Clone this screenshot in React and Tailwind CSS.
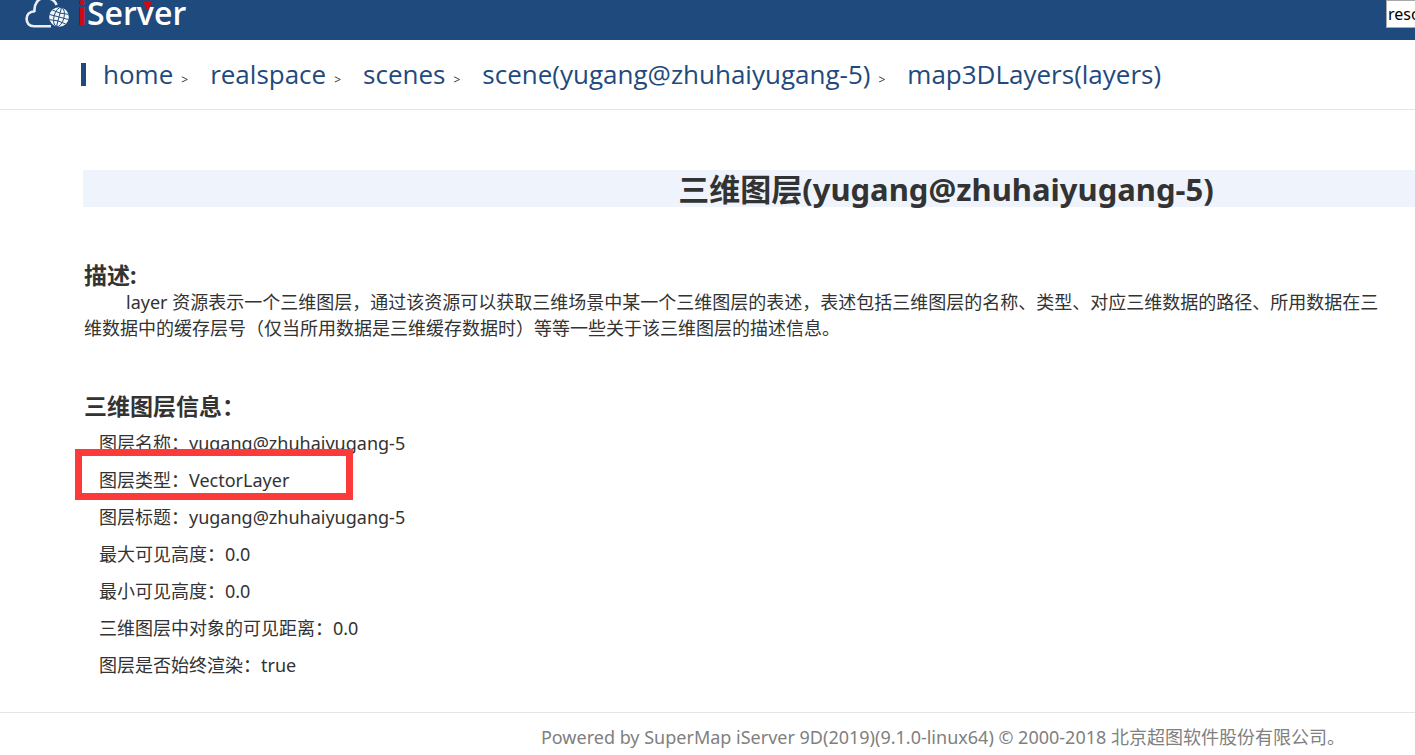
const crumbs = ['home', 'realspace', 'scenes', 'scene(yugang@zhuhaiyugang-5)', 'map3DLayers(layers)'];

const layerInfo = [
  { label: '图层名称', value: 'yugang@zhuhaiyugang-5' },
  { label: '图层类型', value: 'VectorLayer', marked: true },
  { label: '图层标题', value: 'yugang@zhuhaiyugang-5' },
  { label: '最大可见高度', value: '0.0' },
  { label: '最小可见高度', value: '0.0' },
  { label: '三维图层中对象的可见距离', value: '0.0' },
  { label: '图层是否始终渲染', value: 'true' },
];

function Logo() {
  return (
    <svg width="170" height="40" viewBox="0 0 170 40" aria-label="iServer" className="block shrink-0">
      {/* cloud */}
      <path
        d="M27 26.2H10C5 26.2 2.6 23 2.6 18.8C2.6 14.5 5.5 11.2 11 11.2M10.6 12C9.5 4 14.5 -2 20.5 -2C27 -2 31 0.6 32.6 5"
        fill="none"
        stroke="#e9eef5"
        strokeWidth="2.6"
      />
      {/* globe */}
      <circle cx="35" cy="17" r="9.8" fill="#f4f7fa" />
      <g fill="none" stroke="#1f4a7d" strokeWidth="0.9" transform="rotate(15 35 17)">
        <ellipse cx="35" cy="17" rx="5" ry="9.8" />
        <path d="M35 7.2V26.8M25.2 17H44.8M26.8 12Q35 14 43.2 12M26.8 22Q35 20 43.2 22" />
      </g>
      <text y="25" fontFamily="Open Sans, sans-serif" fontSize="32" fontWeight="600" fill="#fff">
        <tspan x="53" fontWeight="700" fill="#cc0a14">i</tspan>
        <tspan x="63">Server</tspan>
      </text>
      <path d="M119 1.5H128L123.8 11.5Z" fill="#d40812" />
    </svg>
  );
}

export default function App() {
  return (
    <div className="overflow-hidden bg-white font-['Noto_Sans','Noto_Sans_CJK_SC',sans-serif] text-[#333]">
      <div className="w-[133%]">
        <header className="flex h-10 items-start bg-[#1f4a7d] pl-6">
          <Logo />
          <input
            type="text"
            aria-label="resource"
            defaultValue="resources"
            className="ml-auto h-7 w-[496px] border border-[#a9a9a9] bg-white px-px text-base text-black"
          />
        </header>

        <nav className="flex h-[70px] items-center border-b border-[#e5e5e5] pl-[81px] font-['Open_Sans',sans-serif]">
          <span className="mr-[17px] h-[23px] w-[5px] bg-[#1f4a7d]" />
          {crumbs.map((name, i) => (
            <span key={name} className="flex items-baseline pb-0.5">
              <a href="#" className="text-[26px] leading-9 text-[#1f4a7d]">{name}</a>
              {i < crumbs.length - 1 && <span className="mr-[22px] ml-2 text-xs text-[#333]">&gt;</span>}
            </span>
          ))}
        </nav>

        <main className="pt-[60px] pr-[73px] pb-7 pl-[83px]">
          <h1 className="h-[37px] bg-[#eff4fc] text-center text-[31px] leading-[38px] font-bold">
            三维图层(yugang@zhuhaiyugang-5)
          </h1>

          <section className="mt-[54px] pl-px">
            <h2 className="text-[23px] leading-7 font-bold">描述:</h2>
            <p className="max-w-[1300px] indent-[42px] text-[18px] leading-[26px]">
              layer 资源表示一个三维图层，通过该资源可以获取三维场景中某一个三维图层的表述，表述包括三维图层的名称、类型、对应三维数据的路径、所用数据在三维数据中的缓存层号（仅当所用数据是三维缓存数据时）等等一些关于该三维图层的描述信息。
            </p>
          </section>

          <section className="mt-[51px] pl-px">
            <h2 className="text-[23px] leading-7 font-bold">三维图层信息：</h2>
            <ul className="mt-[5px] pl-[15px] text-[18px] leading-[37px]">
              {layerInfo.map((row) => (
                <li key={row.label} className="relative">
                  {row.label}：{row.value}
                  {row.marked && (
                    <span className="absolute -top-[13px] -left-6 h-[51px] w-[278px] border-[7px] border-[#fc3a39]" />
                  )}
                </li>
              ))}
            </ul>
          </section>
        </main>

        <footer className="border-t border-[#e5e5e5] pt-[11px] pb-1 pl-1 text-center text-[18px] leading-[26px] text-[#808080]">
          Powered by SuperMap iServer 9D(2019)(9.1.0-linux64) © 2000-2018 北京超图软件股份有限公司。
        </footer>
      </div>
    </div>
  );
}
